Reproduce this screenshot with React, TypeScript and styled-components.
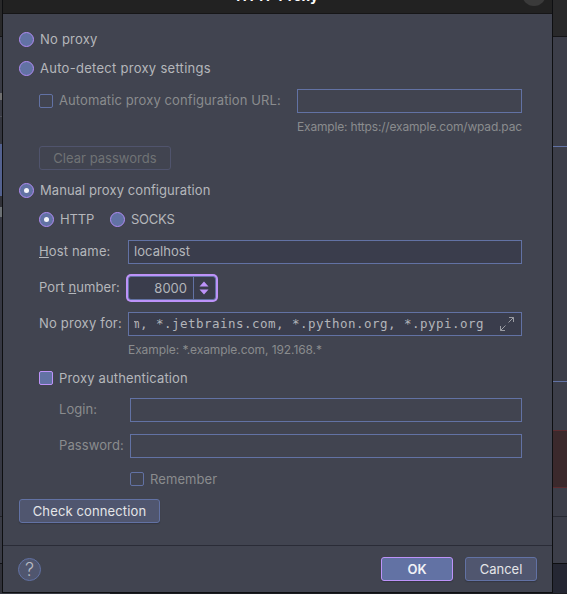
import React from "react";
import styled, { createGlobalStyle, css } from "styled-components";

const Global = createGlobalStyle`
  *, *::before, *::after { box-sizing: border-box; }
  html, body { margin: 0; padding: 0; overflow: hidden; background: #25262e; }
  body {
    font-family: Inter, "Liberation Sans", sans-serif;
    font-size: 13px;
    line-height: 16px;
    color: #b3b5ba;
  }
`;

const Screen = styled.div`
  display: grid;
  grid-template-columns: 2px 551px 14px;
  grid-template-rows: 593px 1px;
  width: 567px;
  height: 594px;
  overflow: hidden;
`;

const Strip = styled.div`
  display: flex;
  flex-direction: column;
  overflow: hidden;
  background: #3c3e49;
`;

const Band = styled.div<{ $h: number; $bg: string; $line?: string }>`
  flex: none;
  height: ${(p) => p.$h}px;
  background: ${(p) => p.$bg};
  ${(p) => p.$line && css`border-bottom: 1px solid ${p.$line};`}
`;

const Underlay = styled.div`
  grid-column: 1 / -1;
  background: linear-gradient(90deg, #393b45 0 110px, #1c1d22 110px);
`;

const Dialog = styled.div`
  display: flex;
  flex-direction: column;
  background: #414450;
  border: solid #0e0f11;
  border-width: 0 1px 1px;
`;

const TitleBar = styled.header`
  position: relative;
  flex: none;
  height: 14px;
  overflow: hidden;
  background: #222222;
  border-bottom: 1px solid #161617;
`;

const Title = styled.div`
  position: absolute;
  top: -13px;
  left: 0;
  right: 0;
  text-align: center;
  font-size: 14px;
  font-weight: 700;
  line-height: 18px;
  color: #ffffff;
  letter-spacing: 0.15px;
`;

const CloseButton = styled.button`
  position: absolute;
  top: -18px;
  right: 6px;
  width: 24px;
  height: 24px;
  padding: 0;
  border: 0;
  border-radius: 50%;
  background: #3a3a3a;
`;

const Body = styled.main`
  display: flex;
  flex-direction: column;
  height: 531px;
  padding: 11px 30px 0 16px;
`;

const Row = styled.div<{ $h?: number; $top?: number; $indent?: number }>`
  display: flex;
  align-items: center;
  flex: none;
  height: ${(p) => p.$h ?? 24}px;
  margin-top: ${(p) => p.$top ?? 0}px;
  padding-left: ${(p) => p.$indent ?? 0}px;
`;

const Text = styled.span<{ $dim?: boolean; $w?: number; $ls?: number; $drop?: boolean }>`
  flex: none;
  padding-bottom: ${(p) => (p.$drop ? 0 : 2)}px;
  white-space: nowrap;
  letter-spacing: ${(p) => p.$ls ?? 0.25}px;
  color: ${(p) => (p.$dim ? "#8a8c8e" : "#b5b7bb")};
  ${(p) => p.$w && css`width: ${p.$w}px;`}

  u {
    text-decoration: underline;
    text-decoration-thickness: 1px;
    text-underline-offset: 1px;
    text-decoration-skip-ink: none;
  }
`;

const Hint = styled.div<{ $indent: number; $ls: number }>`
  flex: none;
  height: 28px;
  padding-left: ${(p) => p.$indent}px;
  font-size: 12px;
  line-height: 28px;
  letter-spacing: ${(p) => p.$ls}px;
  white-space: nowrap;
  color: #8a8c8e;
`;

const RadioMark = styled.span<{ $on?: boolean }>`
  flex: none;
  display: grid;
  place-items: center;
  width: 15px;
  height: 15px;
  margin-right: 6px;
  border: 1px solid #b18cf5;
  border-radius: 50%;
  background: #6272a4;

  &::after {
    content: "";
    width: 5px;
    height: 5px;
    border-radius: 50%;
    background: ${(p) => (p.$on ? "#f4f5fa" : "transparent")};
  }
`;

const CheckMark = styled.span<{ $active?: boolean }>`
  flex: none;
  width: 14px;
  height: 14px;
  margin-right: 6px;
  border: 1px solid ${(p) => (p.$active ? "#bd93f9" : "#6272a4")};
  border-radius: 2px;
  background: ${(p) => (p.$active ? "#6272a4" : "transparent")};
`;

const Field = styled.div<{ $enabled?: boolean }>`
  display: flex;
  align-items: center;
  flex: 1;
  min-width: 0;
  height: 24px;
  padding-left: 5px;
  border: 1px solid #6272a4;
  background: ${(p) => (p.$enabled ? "#3a3d4c" : "transparent")};
`;

const Spinner = styled.div`
  display: flex;
  width: 88px;
  height: 24px;
  border: 1px solid #6272a4;
  border-radius: 3px;
  background: #3a3d4c;
  box-shadow: 0 0 0 2px #bd93f9;
`;

const SpinnerValue = styled.div`
  flex: 1;
  padding-right: 6px;
  text-align: right;
  line-height: 23px;
  letter-spacing: 0;
`;

const SpinnerArrows = styled.div`
  display: flex;
  align-items: center;
  width: 22px;
  padding-left: 5px;
  border-left: 1px solid #6272a4;
`;

const MonoClip = styled.div`
  display: flex;
  justify-content: flex-end;
  width: 350px;
  overflow: hidden;
  font-family: "DejaVu Sans Mono", monospace;
  font-size: 12.5px;
  letter-spacing: 0.475px;
  white-space: pre;
`;

const ExpandIcon = styled.svg`
  display: block;
  margin-left: 15px;
`;

const Button = styled.button<{ $w: number; $kind?: "primary" | "disabled"; $ls?: number }>`
  flex: none;
  width: ${(p) => p.$w}px;
  height: 24px;
  padding: 0;
  border: 1px solid #6272a4;
  border-radius: 3px;
  background: #50566f;
  box-shadow: 0 1px 1px rgba(30, 32, 40, 0.35);
  color: #e4e5e8;
  font: inherit;
  letter-spacing: ${(p) => p.$ls ?? 0.18}px;
  white-space: nowrap;

  ${(p) =>
    p.$kind === "primary" &&
    css`
      border-color: #bd93f9;
      background: #6272a4;
      font-weight: 600;
      color: #f0f1f6;
    `}
  ${(p) =>
    p.$kind === "disabled" &&
    css`
      border-color: #50546d;
      background: transparent;
      box-shadow: none;
      color: #707375;
    `}
`;

const Footer = styled.footer`
  display: flex;
  align-items: center;
  gap: 12px;
  height: 47px;
  padding: 0 15px;
  border-top: 1px solid #2a2c37;
`;

const HelpButton = styled.button`
  width: 23px;
  height: 23px;
  margin: 1px auto 0 0;
  padding: 0;
  border: 1px solid #6272a4;
  border-radius: 50%;
  background: #50566f;
  color: #b9bbc2;
  font: 300 18px/20px Inter, sans-serif;
`;

export default function App() {
  return (
    <>
      <Global />
      <Screen>
        <Strip>
          <Band $h={37} $bg="#29292a" $line="#151517" />
          <Band $h={56} $bg="#393b45" />
          <Band $h={7} $bg="#6f6f70" />
          <Band $h={17} $bg="#393b45" $line="#4c4e57" />
          <Band $h={27} $bg="#34363f" />
          <Band $h={52} $bg="#53618f" />
          <Band $h={11} $bg="#303138" />
          <Band $h={10} $bg="#6b7074" />
          <Band $h={300} $bg="#363843" $line="#222329" />
          <Band $h={47} $bg="#393b45" $line="#111216" />
          <Band $h={29} $bg="#303139" />
        </Strip>
        <Dialog>
          <TitleBar>
            <Title>HTTP Proxy</Title>
            <CloseButton aria-label="Close" />
          </TitleBar>
          <Body>
            <Row $h={29}>
              <RadioMark />
              <Text $ls={0.22}>No proxy</Text>
            </Row>
            <Row $h={29}>
              <RadioMark />
              <Text $ls={0.28}>Auto-detect proxy settings</Text>
            </Row>
            <Row $top={6} $indent={20}>
              <CheckMark />
              <Text $dim $w={238} $ls={0.1}>Automatic proxy configuration URL:</Text>
              <Field />
            </Row>
            <Hint $indent={278} $ls={-0.18}>Example: https://example.com/wpad.pac</Hint>
            <Row $top={5} $indent={20}>
              <Button $w={132} $kind="disabled" $ls={0.02}>Clear passwords</Button>
            </Row>
            <Row $h={29} $top={6}>
              <RadioMark $on />
              <Text $ls={0.08}>Manual proxy configuration</Text>
            </Row>
            <Row $h={29} $indent={20}>
              <RadioMark $on />
              <Text $w={50} $ls={-0.15}>HTTP</Text>
              <RadioMark />
              <Text $ls={-0.25}>SOCKS</Text>
            </Row>
            <Row $top={6} $indent={20}>
              <Text $w={89} $ls={0.16}><u>H</u>ost name:</Text>
              <Field $enabled><Text $ls={0.05}>localhost</Text></Field>
            </Row>
            <Row $top={12} $indent={20}>
              <Text $w={89} $ls={0.08}>Port <u>n</u>umber:</Text>
              <Spinner>
                <SpinnerValue>8000</SpinnerValue>
                <SpinnerArrows>
                  <svg width="10" height="14" viewBox="0 0 10 14" fill="#bd93f9">
                    <path d="M5 0.5 9.5 5.5H0.5Z M0.5 8.5H9.5L5 13.5Z" />
                  </svg>
                </SpinnerArrows>
              </Spinner>
            </Row>
            <Row $top={12} $indent={20}>
              <Text $w={89} $ls={0.2}>No proxy for:</Text>
              <Field $enabled>
                <MonoClip>m, *.jetbrains.com, *.python.org, *.pypi.org</MonoClip>
                <ExpandIcon width="16" height="16" viewBox="0 0 16 16" fill="none" stroke="#9a9ca3">
                  <path d="M9.5 6.5 14.5 1.5M10 1.5h4.5V6M6.5 9.5l-5 5M1.5 10v4.5H6" />
                </ExpandIcon>
              </Field>
            </Row>
            <Hint $indent={109} $ls={-0.08}>Example: *.example.com, 192.168.*</Hint>
            <Row $h={28} $indent={20}>
              <CheckMark $active />
              <Text $drop $ls={0.15}>Proxy authentication</Text>
            </Row>
            <Row $top={6} $indent={40}>
              <Text $dim $w={71} $ls={0.05}>Login:</Text>
              <Field />
            </Row>
            <Row $top={12} $indent={40}>
              <Text $dim $w={71} $ls={0.1}>Password:</Text>
              <Field />
            </Row>
            <Row $h={28} $top={7} $indent={111}>
              <CheckMark />
              <Text $dim $drop $ls={0.08}>Remember</Text>
            </Row>
            <Row $top={6}>
              <Button $w={141} $ls={0.13}>Check connection</Button>
            </Row>
          </Body>
          <Footer>
            <HelpButton>?</HelpButton>
            <Button $w={72} $kind="primary" $ls={0}>OK</Button>
            <Button $w={72} $ls={0}>Cancel</Button>
          </Footer>
        </Dialog>
        <Strip>
          <Band $h={37} $bg="#29292a" $line="#151517" />
          <Band $h={110} $bg="#3c3e49" $line="#6272a4" />
          <Band $h={235} $bg="#3c3e49" $line="#6272a4" />
          <Band $h={49} $bg="#3c3e49" $line="#5c2c30" />
          <Band $h={57} $bg="#3b292c" $line="#5c2c30" />
          <Band $h={29} $bg="#3c3e49" $line="#282a33" />
          <Band $h={47} $bg="#3c3e49" $line="#0e0f11" />
          <Band $h={29} $bg="#252733" />
        </Strip>
        <Underlay />
      </Screen>
    </>
  );
}
